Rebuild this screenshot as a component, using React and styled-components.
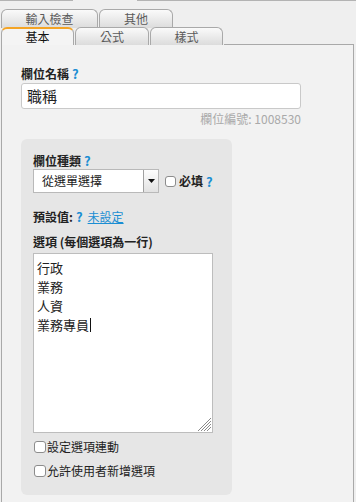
import React from 'react';
import styled, { createGlobalStyle } from 'styled-components';

const Global = createGlobalStyle`
  html, body { margin: 0; padding: 0; background: #efefef; }
  body {
    font-family: "Noto Sans CJK TC", "Noto Sans", sans-serif;
    color: #222;
    width: 356px;
    height: 502px;
    overflow: hidden;
  }
`;

const TopEdge = styled.div`
  display: flex;
  height: 1px;
`;

const EdgeSeg = styled.div`
  width: ${p => (p.$w ? `${p.$w}px` : 'auto')};
  flex: ${p => (p.$w ? 'none' : '1')};
  background: ${p => (p.$on ? '#b3b3b3' : 'transparent')};
`;

const TabArea = styled.div`
  padding-top: 8px;
  margin: 0 2px 0 1px;
`;

const TabRow = styled.div`
  display: flex;
  gap: 1px;
  margin-top: ${p => (p.$front ? '-1px' : '0')};
`;

const Tab = styled.div`
  box-sizing: border-box;
  width: ${p => p.$w}px;
  height: ${p => p.$h}px;
  border: 1px solid #a9a9a9;
  border-bottom: none;
  border-radius: 6px 6px 0 0;
  background: linear-gradient(#fafafa, #dcdcdc);
  font-size: 12px;
  line-height: ${p => p.$lh}px;
  padding-top: ${p => p.$pt || 0}px;
  color: #5a5a5a;
  text-align: center;
`;

const ActiveTab = styled(Tab)`
  border-top: 2px solid #f4a425;
  background: #f4f4f4;
  color: #111;
`;

const TabFiller = styled.div`
  flex: 1;
  border-bottom: 1px solid #a9a9a9;
`;

const Panel = styled.div`
  box-sizing: border-box;
  margin: 0 2px 0 1px;
  min-height: 457px;
  background: #f2f2f2;
  border-left: 1px solid #a9a9a9;
  border-right: 1px solid #a9a9a9;
  padding: 21px 0 0 19px;
`;

const Label = styled.div`
  font-size: 12px;
  font-weight: bold;
  line-height: 16px;
  color: #222;
  margin-top: ${p => p.$mt || 0}px;
  display: flex;
  align-items: center;
  gap: 3px;
`;

const Help = styled.span`
  color: #1b8ed3;
  font-weight: bold;
  font-size: 13px;
`;

const TextInput = styled.div`
  box-sizing: border-box;
  margin-top: 1px;
  width: 280px;
  height: 26px;
  background: #fff;
  border: 1px solid #c9c9c9;
  border-radius: 3px;
  padding: 0 5px;
  font-size: 15px;
  line-height: 24px;
  color: #222;
`;

const FieldId = styled.div`
  width: 280px;
  margin-top: 2px;
  text-align: right;
  font-size: 12px;
  line-height: 15px;
  color: #a9a9a9;
`;

const Card = styled.div`
  box-sizing: border-box;
  margin-top: 13px;
  width: 211px;
  background: #e6e6e6;
  border-radius: 6px;
  padding: 14px 12px 16px;
`;

const TypeRow = styled.div`
  display: flex;
  align-items: center;
`;

const SelectBox = styled.div`
  box-sizing: border-box;
  width: 126px;
  height: 24px;
  display: flex;
  background: #fff;
  border: 1px solid #b9b9b9;
`;

const SelectText = styled.div`
  flex: 1;
  padding-left: 8px;
  font-size: 12px;
  line-height: 22px;
  color: #222;
`;

const SelectButton = styled.div`
  width: 14px;
  border-left: 1px solid #a0a0a0;
  background: linear-gradient(#fdfdfd, #e2e2e2);
  display: flex;
  align-items: center;
  justify-content: center;
`;

const Check = styled.input.attrs({ type: 'checkbox' })`
  appearance: none;
  -webkit-appearance: none;
  box-sizing: border-box;
  margin: 0;
  width: ${p => p.$s}px;
  height: ${p => p.$s}px;
  background: #fff;
  border: 1px solid #8c8c8c;
  border-radius: 3px;
  flex: none;
`;

const RequiredLabel = styled.span`
  margin-left: 3px;
  font-size: 12px;
  font-weight: bold;
  line-height: 16px;
`;

const Link = styled.a`
  color: #1b8ed3;
  font-weight: normal;
  text-decoration: underline;
  margin-left: 2px;
  cursor: pointer;
`;

const OptionsBox = styled.div`
  position: relative;
  box-sizing: border-box;
  margin-top: 3px;
  width: 180px;
  height: 180px;
  background: #fff;
  border: 1px solid #bdbdbd;
  padding: 4px 3px;
  font-size: 13px;
  line-height: 19px;
  color: #222;
`;

const OptionLine = styled.div`
  white-space: nowrap;
`;

const Caret = styled.span`
  display: inline-block;
  width: 1px;
  height: 14px;
  background: #111;
  vertical-align: -2px;
  margin-left: 1px;
`;

const Grip = styled.svg`
  position: absolute;
  right: 1px;
  bottom: 1px;
`;

const CheckRow = styled.label`
  display: flex;
  align-items: center;
  gap: 1px;
  margin-top: ${p => p.$mt}px;
  font-size: 12px;
  line-height: 16px;
  color: #222;
  padding-left: 1px;
`;

export default function App() {
  const options = ['行政', '業務', '人資', '業務專員'];
  return (
    <>
      <Global />
      <TopEdge>
        <EdgeSeg $w={73} $on />
        <EdgeSeg $w={64} />
        <EdgeSeg $on />
      </TopEdge>
      <TabArea>
        <TabRow>
          <Tab $w={97} $h={19} $lh={17}>輸入檢查</Tab>
          <Tab $w={74} $h={19} $lh={17}>其他</Tab>
        </TabRow>
        <TabRow $front>
          <ActiveTab $w={73} $h={18} $lh={16}>基本</ActiveTab>
          <Tab $w={74} $h={18} $lh={16} $pt={1}>公式</Tab>
          <Tab $w={73} $h={18} $lh={16} $pt={1}>樣式</Tab>
          <TabFiller />
        </TabRow>
      </TabArea>
      <Panel>
        <Label>欄位名稱<Help>?</Help></Label>
        <TextInput>職稱</TextInput>
        <FieldId>欄位編號: 1008530</FieldId>
        <Card>
          <Label>欄位種類<Help>?</Help></Label>
          <TypeRow>
            <SelectBox>
              <SelectText>從選單選擇</SelectText>
              <SelectButton>
                <svg width="7" height="4" viewBox="0 0 7 4">
                  <path d="M0 0 H7 L3.5 4 Z" fill="#111" />
                </svg>
              </SelectButton>
            </SelectBox>
            <Check $s={11} style={{ marginLeft: 6 }} />
            <RequiredLabel>必填</RequiredLabel>
            <Help style={{ marginLeft: 3 }}>?</Help>
          </TypeRow>
          <Label $mt={16}>
            預設值:<Help>?</Help><Link>未設定</Link>
          </Label>
          <Label $mt={9}>選項 (每個選項為一行)</Label>
          <OptionsBox>
            {options.map((o, i) => (
              <OptionLine key={o}>
                {o}
                {i === options.length - 1 && <Caret />}
              </OptionLine>
            ))}
            <Grip width="14" height="14" viewBox="0 0 14 14">
              {[13, 10, 7, 4].map(l => (
                <line key={l} x1={14 - l} y1="14" x2="14" y2={14 - l} stroke="#8a8a8a" strokeWidth="1" />
              ))}
            </Grip>
          </OptionsBox>
          <CheckRow $mt={6}><Check $s={12} />設定選項連動</CheckRow>
          <CheckRow $mt={8}><Check $s={12} />允許使用者新增選項</CheckRow>
        </Card>
      </Panel>
    </>
  );
}
